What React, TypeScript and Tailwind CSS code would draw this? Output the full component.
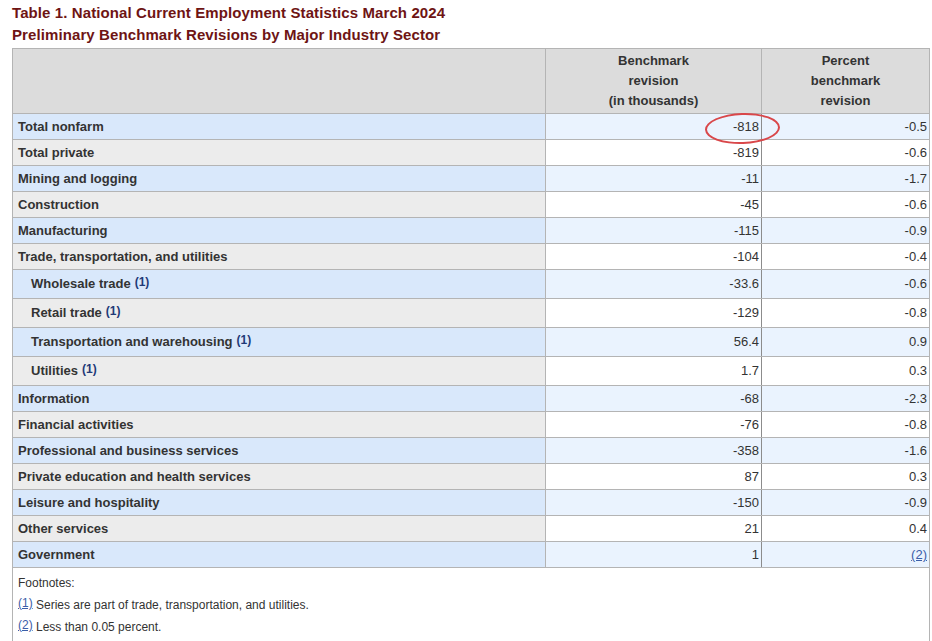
import React from "react";

type Row = { label: string; rev: string; pct: string; sub?: boolean; note2?: boolean };

const rows: Row[] = [
  { label: "Total nonfarm", rev: "-818", pct: "-0.5" },
  { label: "Total private", rev: "-819", pct: "-0.6" },
  { label: "Mining and logging", rev: "-11", pct: "-1.7" },
  { label: "Construction", rev: "-45", pct: "-0.6" },
  { label: "Manufacturing", rev: "-115", pct: "-0.9" },
  { label: "Trade, transportation, and utilities", rev: "-104", pct: "-0.4" },
  { label: "Wholesale trade", rev: "-33.6", pct: "-0.6", sub: true },
  { label: "Retail trade", rev: "-129", pct: "-0.8", sub: true },
  { label: "Transportation and warehousing", rev: "56.4", pct: "0.9", sub: true },
  { label: "Utilities", rev: "1.7", pct: "0.3", sub: true },
  { label: "Information", rev: "-68", pct: "-2.3" },
  { label: "Financial activities", rev: "-76", pct: "-0.8" },
  { label: "Professional and business services", rev: "-358", pct: "-1.6" },
  { label: "Private education and health services", rev: "87", pct: "0.3" },
  { label: "Leisure and hospitality", rev: "-150", pct: "-0.9" },
  { label: "Other services", rev: "21", pct: "0.4" },
  { label: "Government", rev: "1", pct: "", note2: true },
];

export default function App() {
  return (
    <div className="w-[932px] h-[641px] overflow-hidden bg-white pl-3 pt-[2px] text-[#333] font-['Tahoma','Liberation_Sans',sans-serif]">
      <h1 className="text-[15px] leading-[22px] font-bold text-[#6e1414] tracking-[0.1px]">
        Table 1. National Current Employment Statistics March 2024
        <br />
        Preliminary Benchmark Revisions by Major Industry Sector
      </h1>
      <table className="mt-[2px] w-[917px] border-collapse text-[13px] table-fixed">
        <colgroup>
          <col className="w-[533px]" />
          <col className="w-[216px]" />
          <col className="w-[168px]" />
        </colgroup>
        <thead>
          <tr className="h-[65px] bg-[#dcdcdc] font-bold leading-[20px]">
            <th className="border border-[#b4b4b4]"></th>
            <th className="border border-[#b4b4b4] text-center font-bold">
              Benchmark
              <br />
              revision
              <br />
              (in thousands)
            </th>
            <th className="border border-[#b4b4b4] text-center font-bold">
              Percent
              <br />
              benchmark
              <br />
              revision
            </th>
          </tr>
        </thead>
        <tbody>
          {rows.map((r, i) => {
            const odd = i % 2 === 0;
            return (
              <tr key={r.label} className={r.sub ? "h-[29px]" : "h-[26px]"}>
                <th
                  className={`border border-[#b4b4b4] text-left font-bold ${r.sub ? "pl-[18px]" : "pl-[5px]"} ${
                    odd ? "bg-[#d9e8fb]" : "bg-[#ececec]"
                  }`}
                >
                  {r.label}
                  {r.sub && (
                    <span className="relative -top-[2px] ml-[4px] text-[12px] font-bold text-[#1f3a78]">(1)</span>
                  )}
                </th>
                <td
                  className={`relative border border-[#b4b4b4] border-r-[#8c8c8c] pr-[2px] text-right ${
                    odd ? "bg-[#eaf3fe]" : "bg-white"
                  }`}
                >
                  {r.rev}
                  {i === 0 && (
                    <span className="pointer-events-none absolute z-10 left-[159px] -top-[1px] h-[31px] w-[75px] -rotate-2 rounded-[50%] border-[2.5px] border-[#d9474a]" />
                  )}
                </td>
                <td className={`border border-[#b4b4b4] pr-[2px] text-right ${odd ? "bg-[#eaf3fe]" : "bg-white"}`}>
                  {r.note2 ? <span className="text-[#3b5ea8] underline decoration-[#3b5ea8]">(2)</span> : r.pct}
                </td>
              </tr>
            );
          })}
          <tr>
            <td colSpan={3} className="border border-[#b4b4b4] px-[5px] pt-[4px] pb-[6px] text-[12px] leading-[22px] font-normal">
              <div>Footnotes:</div>
              <div>
                <span className="relative -top-[2px] text-[#3b5ea8] underline">(1)</span> Series are part of trade,
                transportation, and utilities.
              </div>
              <div>
                <span className="relative -top-[2px] text-[#3b5ea8] underline">(2)</span> Less than 0.05 percent.
              </div>
            </td>
          </tr>
        </tbody>
      </table>
    </div>
  );
}
